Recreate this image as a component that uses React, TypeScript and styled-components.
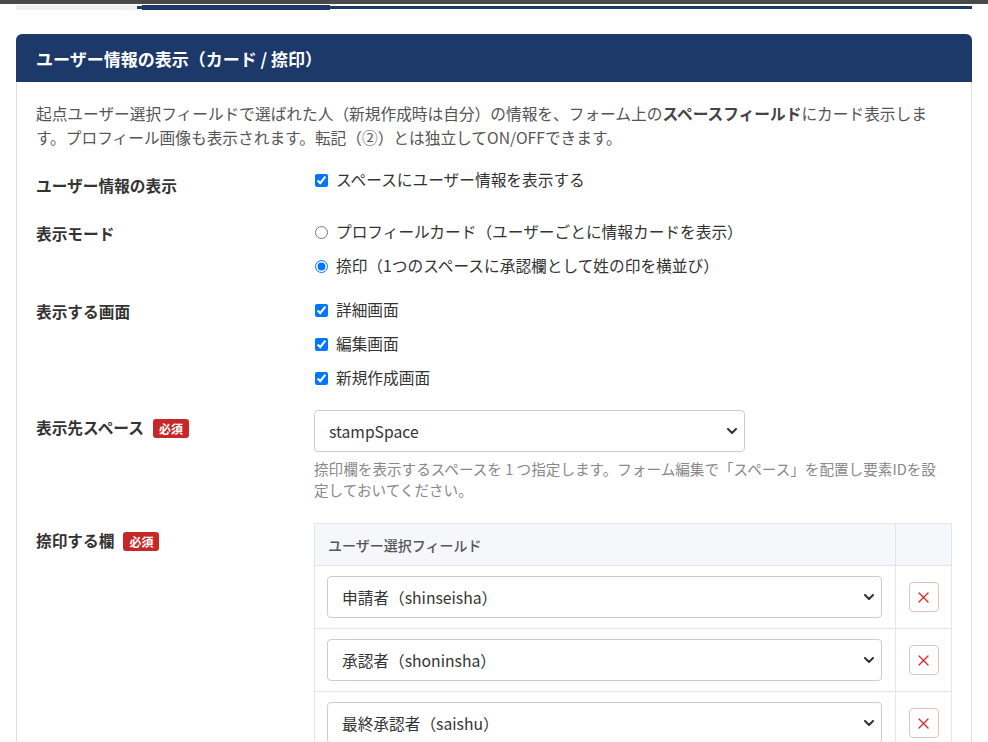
import React from "react";
import styled, { createGlobalStyle } from "styled-components";

const GlobalStyle = createGlobalStyle`
  html, body { margin: 0; padding: 0; background: #fff; }
  body {
    font-family: "Noto Sans CJK JP", "Noto Sans", sans-serif;
    color: #333;
  }
  * { box-sizing: border-box; }
`;

const TopBar = styled.div`
  height: 4px;
  background: #494949;
`;

const Page = styled.div`
  padding: 0 16px 40px;
`;

const Tabs = styled.div`
  display: flex;
  height: 5px;
  margin-top: 1px;
`;

const Tab = styled.div`
  width: 121px;
  height: 5px;
  background: #eef0f3;
`;

const TabTrack = styled.div`
  flex: 1;
  display: flex;
  height: 3px;
  margin-top: 1px;
  background: #1d3969;
`;

const ActiveTab = styled.div`
  width: 188px;
  height: 5px;
  margin-top: -1px;
  margin-left: 5px;
  background: #1d3969;
`;

const Card = styled.section`
  margin-top: 24px;
`;

const CardHeader = styled.header`
  height: 48px;
  display: flex;
  align-items: center;
  padding: 0 20px;
  background: #1d3969;
  border-radius: 6px 6px 0 0;
  color: #fff;
  font-size: 17px;
  font-weight: 700;
`;

const CardBody = styled.div`
  border: 1px solid #dcdfe4;
  border-top: none;
  padding: 20px 19px 24px;
`;

const Desc = styled.p`
  margin: 0 0 18px;
  max-width: 900px;
  font-size: 15.7px;
  line-height: 24px;
  color: #555;
  strong { color: #444; font-weight: 700; }
`;

const Row = styled.div<{ $mb: number }>`
  display: grid;
  grid-template-columns: 278px 1fr;
  margin-bottom: ${(p) => p.$mb}px;
`;

const Label = styled.div`
  display: flex;
  align-items: center;
  gap: 9px;
  padding-top: 6px;
  height: 30px;
  font-size: 15.7px;
  line-height: 24px;
  font-weight: 700;
  color: #333;
`;

const Badge = styled.span`
  display: inline-block;
  height: 19px;
  line-height: 19px;
  padding: 0 6px;
  border-radius: 3px;
  background: #c62828;
  color: #fff;
  font-size: 12px;
  font-weight: 700;
`;

const Options = styled.div<{ $pt: number }>`
  display: flex;
  flex-direction: column;
  gap: 10px;
  padding-top: ${(p) => p.$pt}px;
`;

const Option = styled.label`
  display: flex;
  align-items: center;
  height: 24px;
  font-size: 15.7px;
  line-height: 24px;
  color: #333;
`;

const Input = styled.input`
  width: 13px;
  height: 13px;
  margin: 0 8px 0 1px;
`;

const Control = styled.div`
  min-width: 0;
`;

const SelectWrap = styled.div<{ $w?: number }>`
  position: relative;
  width: ${(p) => (p.$w ? `${p.$w}px` : "100%")};
`;

const Select = styled.select`
  appearance: none;
  width: 100%;
  height: 42px;
  padding: 0 36px 0 14px;
  border: 1px solid #c9cdd3;
  border-radius: 4px;
  background: #fff;
  font-family: inherit;
  font-size: 15.7px;
  color: #333;
`;

const Chevron = styled.svg`
  position: absolute;
  right: 8px;
  top: 18px;
  pointer-events: none;
`;

const Help = styled.div`
  margin-top: 6px;
  max-width: 628px;
  font-size: 14.6px;
  line-height: 21px;
  color: #888;
`;

const Table = styled.table`
  width: 100%;
  border-collapse: collapse;
  border: 1px solid #e1e5ec;
`;

const Th = styled.th<{ $w?: number }>`
  height: 42px;
  padding: 0 13px;
  background: #f5f7fa;
  border: 1px solid #e1e5ec;
  text-align: left;
  font-size: 14px;
  font-weight: 500;
  color: #555;
  ${(p) => (p.$w ? `width: ${p.$w}px;` : "")}
`;

const Td = styled.td`
  padding: 10px 13px 10px 12px;
  border: 1px solid #e1e5ec;
  vertical-align: middle;
`;

const ActionTd = styled.td`
  padding: 0;
  border: 1px solid #e1e5ec;
  text-align: center;
  vertical-align: middle;
`;

const DeleteButton = styled.button`
  display: inline-flex;
  align-items: center;
  justify-content: center;
  width: 30px;
  height: 30px;
  padding: 0;
  border: 1px solid #e4c1c1;
  border-radius: 4px;
  background: #fff;
  cursor: pointer;
`;

const ChevronIcon = () => (
  <Chevron width="10" height="6" viewBox="0 0 10 6">
    <path d="M1 1 L5 5 L9 1" fill="none" stroke="#333" strokeWidth="2" strokeLinecap="round" strokeLinejoin="round" />
  </Chevron>
);

const stampRows = [
  { value: "shinseisha", label: "申請者（shinseisha）" },
  { value: "shoninsha", label: "承認者（shoninsha）" },
  { value: "saishu", label: "最終承認者（saishu）" },
];

export default function App() {
  return (
    <>
      <GlobalStyle />
      <TopBar />
      <Page>
        <Tabs>
          <Tab />
          <TabTrack>
            <ActiveTab />
          </TabTrack>
        </Tabs>
        <Card>
          <CardHeader>ユーザー情報の表示（カード / 捺印）</CardHeader>
          <CardBody>
            <Desc>
              起点ユーザー選択フィールドで選ばれた人（新規作成時は自分）の情報を、フォーム上の
              <strong>スペースフィールド</strong>
              にカード表示します。プロフィール画像も表示されます。転記（②）とは独立してON/OFFできます。
            </Desc>

            <Row $mb={18}>
              <Label>ユーザー情報の表示</Label>
              <Options $pt={0}>
                <Option>
                  <Input type="checkbox" defaultChecked />
                  スペースにユーザー情報を表示する
                </Option>
              </Options>
            </Row>

            <Row $mb={16}>
              <Label>表示モード</Label>
              <Options $pt={4}>
                <Option>
                  <Input type="radio" name="mode" />
                  プロフィールカード（ユーザーごとに情報カードを表示）
                </Option>
                <Option>
                  <Input type="radio" name="mode" defaultChecked />
                  捺印（1つのスペースに承認欄として姓の印を横並び）
                </Option>
              </Options>
            </Row>

            <Row $mb={20}>
              <Label>表示する画面</Label>
              <Options $pt={4}>
                <Option>
                  <Input type="checkbox" defaultChecked />
                  詳細画面
                </Option>
                <Option>
                  <Input type="checkbox" defaultChecked />
                  編集画面
                </Option>
                <Option>
                  <Input type="checkbox" defaultChecked />
                  新規作成画面
                </Option>
              </Options>
            </Row>

            <Row $mb={23}>
              <Label>
                表示先スペース<Badge>必須</Badge>
              </Label>
              <Control>
                <SelectWrap $w={431}>
                  <Select defaultValue="stampSpace">
                    <option value="stampSpace">stampSpace</option>
                  </Select>
                  <ChevronIcon />
                </SelectWrap>
                <Help>
                  捺印欄を表示するスペースを 1 つ指定します。フォーム編集で「スペース」を配置し要素IDを設定しておいてください。
                </Help>
              </Control>
            </Row>

            <Row $mb={16}>
              <Label>
                捺印する欄<Badge>必須</Badge>
              </Label>
              <Control>
                <Table>
                  <thead>
                    <tr>
                      <Th>ユーザー選択フィールド</Th>
                      <Th $w={56} />
                    </tr>
                  </thead>
                  <tbody>
                    {stampRows.map((r) => (
                      <tr key={r.value}>
                        <Td>
                          <SelectWrap>
                            <Select defaultValue={r.value}>
                              <option value={r.value}>{r.label}</option>
                            </Select>
                            <ChevronIcon />
                          </SelectWrap>
                        </Td>
                        <ActionTd>
                          <DeleteButton aria-label="削除">
                            <svg width="11" height="11" viewBox="0 0 11 11">
                              <path d="M1 1 L10 10 M10 1 L1 10" stroke="#d32f2f" strokeWidth="1.4" strokeLinecap="round" />
                            </svg>
                          </DeleteButton>
                        </ActionTd>
                      </tr>
                    ))}
                  </tbody>
                </Table>
              </Control>
            </Row>
          </CardBody>
        </Card>
      </Page>
    </>
  );
}
